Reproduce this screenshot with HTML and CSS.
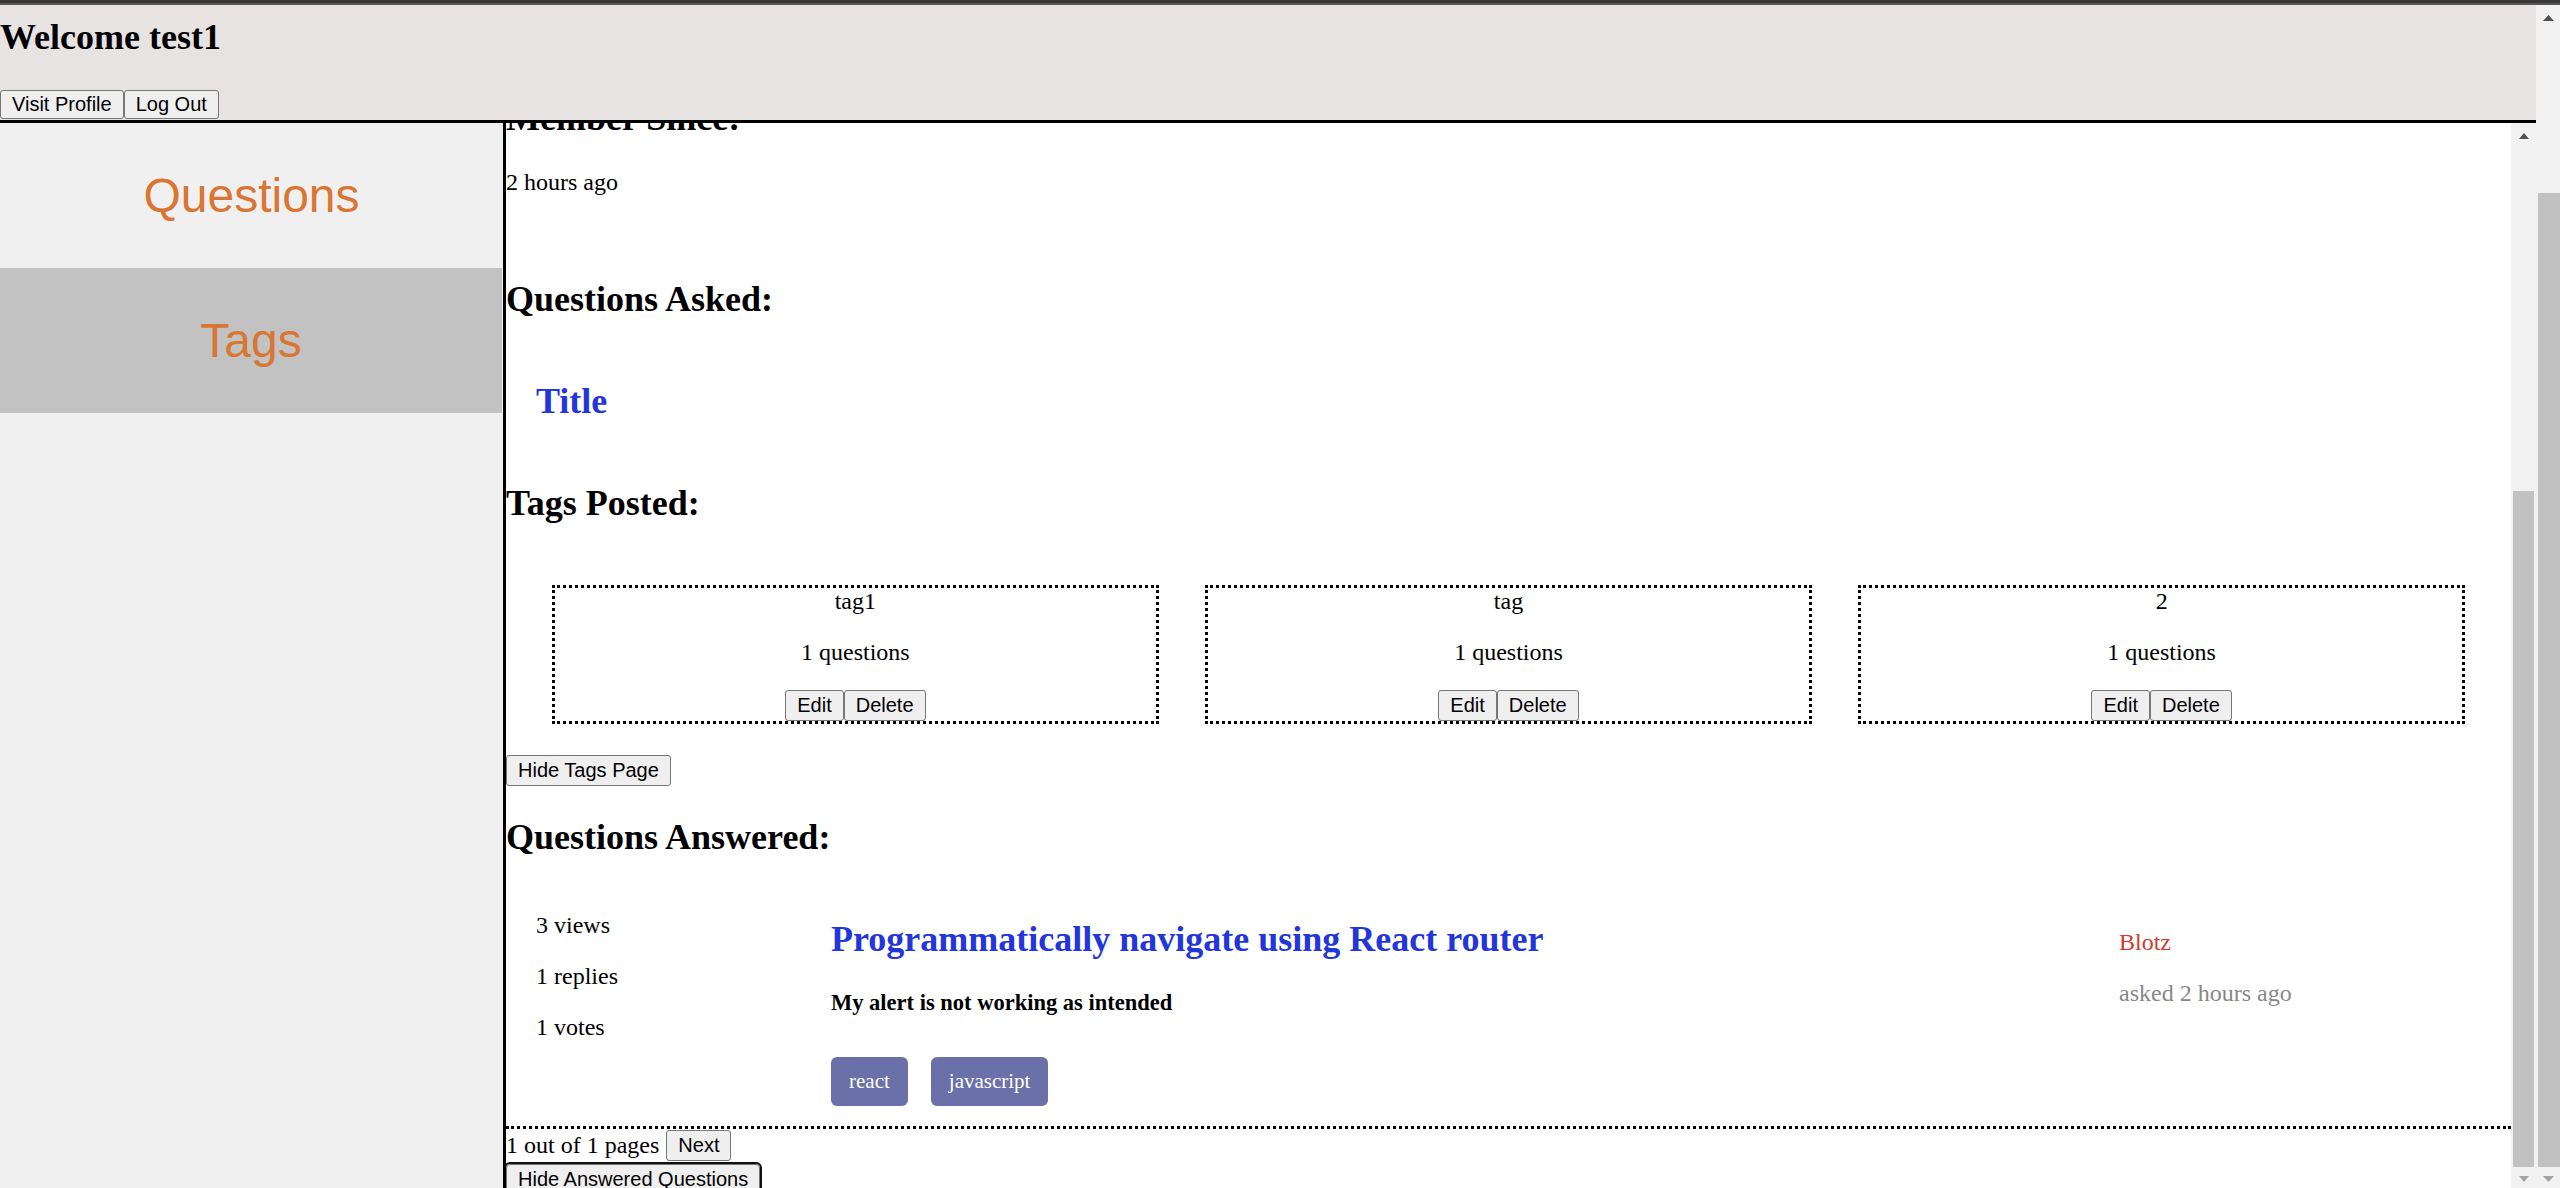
FILE: index.html
```html
<!DOCTYPE html>
<html lang="en">
<head>
<meta charset="utf-8">
<title>Profile</title>
<link rel="stylesheet" href="styles.css">
</head>
<body>
<div class="topstrip"></div>
<div class="window">
  <div class="page">
    <header class="header">
      <h2 class="welcome">Welcome test1</h2>
      <div class="btnrow"><button class="btn">Visit Profile</button><button class="btn">Log Out</button></div>
    </header>
    <div class="body-row">
      <nav class="sidebar">
        <div class="nav-item">Questions</div>
        <div class="nav-item nav-item-active">Tags</div>
      </nav>
      <main class="main">
        <div class="content">
          <h2 class="h2 since-h">Member Since:</h2>
          <p class="p since">2 hours ago</p>
          <h2 class="h2">Questions Asked:</h2>
          <div class="asked"><h2 class="h2 qtitle">Title</h2></div>
          <h2 class="h2">Tags Posted:</h2>
          <div class="tag-grid">
            <div class="tag-card">
              <div class="tag-name">tag1</div>
              <p class="tag-count">1 questions</p>
              <div class="tag-actions"><button class="btn">Edit</button><button class="btn">Delete</button></div>
            </div>
            <div class="tag-card">
              <div class="tag-name">tag</div>
              <p class="tag-count">1 questions</p>
              <div class="tag-actions"><button class="btn">Edit</button><button class="btn">Delete</button></div>
            </div>
            <div class="tag-card">
              <div class="tag-name">2</div>
              <p class="tag-count">1 questions</p>
              <div class="tag-actions"><button class="btn">Edit</button><button class="btn">Delete</button></div>
            </div>
          </div>
          <button class="btn btn-block">Hide Tags Page</button>
          <h2 class="h2">Questions Answered:</h2>
          <div class="qrow">
            <div class="qcol-stats">
              <p class="stat">3 views</p>
              <p class="stat">1 replies</p>
              <p class="stat">1 votes</p>
            </div>
            <div class="qcol-main">
              <h2 class="h2 qlink">Programmatically navigate using React router</h2>
              <p class="qsummary">My alert is not working as intended</p>
              <div class="qtags"><span class="qtag">react</span><span class="qtag">javascript</span></div>
            </div>
            <div class="qcol-meta">
              <p class="author">Blotz</p>
              <p class="asked-time">asked 2 hours ago</p>
            </div>
          </div>
          <div class="pager"><span class="pager-text">1 out of 1 pages</span><button class="btn btn-next">Next</button></div>
          <button class="btn btn-block btn-focus">Hide Answered Questions</button>
        </div>
      </main>
      <div class="vscroll vscroll-inner">
        <div class="sb-btn sb-up"><svg width="10" height="6" viewBox="0 0 10 6"><polygon points="5,0 10,6 0,6" fill="#505050"/></svg></div>
        <div class="sb-space sb-space-inner"></div>
        <div class="sb-thumb"></div>
        <div class="sb-btn sb-down"><svg width="10" height="6" viewBox="0 0 10 6"><polygon points="0,0 10,0 5,6" fill="#a3a3a3"/></svg></div>
      </div>
    </div>
  </div>
  <div class="vscroll vscroll-outer">
    <div class="sb-btn sb-up sb-up-outer"><svg width="11" height="6" viewBox="0 0 11 6"><polygon points="5.5,0 11,6 0,6" fill="#505050"/></svg></div>
    <div class="sb-space sb-space-outer"></div>
    <div class="sb-thumb sb-thumb-outer"></div>
    <div class="sb-btn sb-down"><svg width="11" height="6" viewBox="0 0 11 6"><polygon points="0,0 11,0 5.5,6" fill="#a3a3a3"/></svg></div>
  </div>
</div>
</body>
</html>
```

FILE: styles.css
```css
html, body {
  margin: 0;
  padding: 0;
  height: 1188px;
  overflow: hidden;
  background: #ffffff;
}

body {
  font-family: "Liberation Serif", "Times New Roman", serif;
  font-size: 24px;
  color: #000;
}

.topstrip {
  height: 5px;
  background: linear-gradient(to bottom, #383838 0, #383838 3px, #575757 3px, #575757 5px);
}

.window {
  display: flex;
  height: 1183px;
}

.page {
  flex: 1;
  min-width: 0;
  display: flex;
  flex-direction: column;
}

.header {
  height: 115px;
  background: #e7e3e2;
  border-bottom: 3px solid #000;
  display: flex;
  flex-direction: column;
  flex-shrink: 0;
}

.welcome {
  margin: 11px 0 0;
  font-size: 36px;
  font-weight: bold;
}

.btnrow {
  margin-top: auto;
  margin-bottom: 1px;
  display: flex;
}

.btn {
  font-family: "Liberation Sans", Arial, sans-serif;
  font-size: 20px;
  line-height: 23px;
  color: #000;
  background: #efefef;
  border: 1px solid #767676;
  border-radius: 3px;
  padding: 2px 11px;
  margin: 0;
}

.btn-block {
  display: block;
}

.body-row {
  flex: 1;
  min-height: 0;
  display: flex;
}

.sidebar {
  width: 503px;
  flex-shrink: 0;
  background: #f0f0f0;
}

.nav-item {
  height: 145px;
  display: flex;
  align-items: center;
  justify-content: center;
  font-family: "Liberation Sans", Arial, sans-serif;
  font-size: 48px;
  color: #d97633;
}

.nav-item-active {
  background: #c2c2c2;
  margin-right: 1px;
}

.main {
  flex: 1;
  min-width: 0;
  border-left: 3px solid #000;
  background: #fff;
  overflow: hidden;
}

.h2 {
  font-size: 36px;
  font-weight: bold;
  margin: 30px 0;
}

.since-h {
  margin-top: -26px;
}

.since {
  margin: 24px 0 82px;
}

.asked {
  display: flow-root;
  padding-left: 30px;
}

.qtitle {
  color: #2236db;
}

.tag-grid {
  display: flex;
  justify-content: space-evenly;
}

.tag-card {
  width: 30%;
  border: 3px dotted #000;
  margin: 31px 0;
  text-align: center;
}

.tag-count {
  margin: 24px 0;
}

.tag-actions {
  display: flex;
  justify-content: center;
}

.tag-actions .btn,
.btn-block {
  padding-top: 3px;
  padding-bottom: 3px;
}

.qrow {
  display: flex;
  padding-left: 30px;
  border-bottom: 3px dotted #000;
}

.qcol-stats {
  width: 295px;
  flex: none;
}

.stat {
  margin: 24px 0;
}

.qcol-main {
  width: 1288px;
  flex: none;
}

.qlink {
  color: #2236db;
}

.qsummary {
  font-size: 22.5px;
  font-weight: bold;
  margin: 22.5px 0;
}

.qtags {
  display: flex;
  gap: 23px;
  margin: 41px 0 20px;
}

.qtag {
  background: #6b71a8;
  color: #fff;
  font-size: 21px;
  padding: 12px 18px;
  border-radius: 6px;
}

.qcol-meta {
  flex: 1;
  padding-top: 17px;
}

.author {
  color: #cf3a2b;
  margin: 24px 0;
}

.asked-time {
  color: #888888;
  margin: 24px 0;
}

.pager {
  display: flex;
  align-items: center;
  margin-top: 1px;
}

.btn-next {
  margin-left: 7px;
  padding-top: 3px;
  padding-bottom: 3px;
}

.btn-focus {
  margin-top: 3px;
  outline: 2px solid #111;
  border-radius: 4px;
}

.vscroll {
  flex-shrink: 0;
  background: #f1f1f1;
  display: flex;
  flex-direction: column;
}

.vscroll-inner {
  width: 25px;
}

.vscroll-outer {
  width: 24px;
}

.sb-btn {
  display: flex;
  justify-content: center;
  flex-shrink: 0;
}

.sb-up {
  height: 26px;
  align-items: center;
}

.sb-up-outer {
  height: 25px;
}

.sb-down {
  height: 21px;
  align-items: flex-start;
  padding-top: 9px;
  box-sizing: border-box;
}

.sb-space-inner {
  height: 342px;
  flex-shrink: 0;
}

.sb-space-outer {
  height: 163px;
  flex-shrink: 0;
}

.sb-thumb {
  flex: 1;
  background: #c1c1c1;
  margin: 0 2px;
}

.sb-thumb-outer {
  margin: 0 0 0 2px;
}
```
